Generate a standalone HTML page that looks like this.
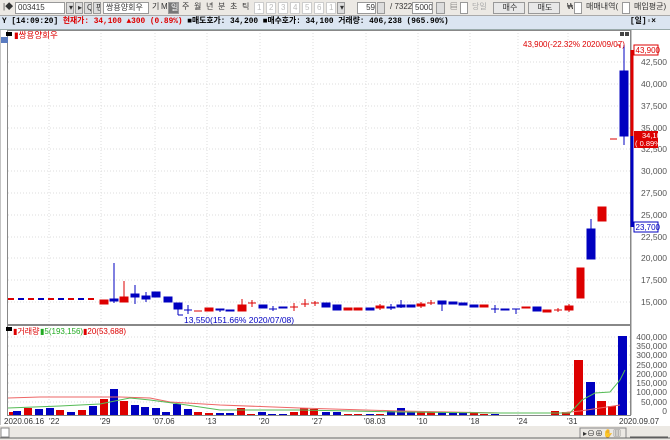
<!DOCTYPE html>
<html><head><meta charset="utf-8"><style>
*{margin:0;padding:0;box-sizing:border-box}
body{width:670px;height:440px;overflow:hidden;background:#fff;font-family:"Liberation Sans","Noto Sans CJK KR",sans-serif;font-size:10px;position:relative}
.tb{position:absolute;left:0;top:0;width:670px;height:16px;background:#ece9e4;border-bottom:1px solid #aaa}
.tb span{position:absolute;top:2px;height:12px;border:1px solid #999;background:#fff;font-size:8px;line-height:10px;padding-left:2px;color:#333;overflow:hidden;white-space:nowrap}
.ib{position:absolute;left:0;top:16px;width:670px;height:14px;background:#dbe5f1;border-bottom:1px solid #9aa;font-family:"Liberation Mono","Noto Sans CJK KR",monospace;font-size:7.8px;font-weight:bold;line-height:13px;white-space:nowrap;padding-left:2px}
</style></head><body>
<div class="tb">
<span style="left:1px;width:12px;border:none;background:none">|◆</span>
<span style="left:15px;width:50px">003415</span>
<span style="left:66px;width:8px;background:#ddd">▾</span>
<span style="left:75px;width:8px;background:#ddd">▸</span>
<span style="left:84px;width:8px;background:#ddd">Q</span>
<span style="left:93px;width:8px;background:#ddd">편</span>
<span style="left:103px;width:46px">쌍용양회우</span>
<span style="left:150px;width:10px;border:none;background:none">기</span>
<span style="left:159px;width:8px;border:none;background:none">M</span>
<span style="left:168px;width:11px;background:#777;color:#fff">일</span>
<span style="left:180px;width:11px;border:none;background:none">주</span>
<span style="left:192px;width:11px;border:none;background:none">월</span>
<span style="left:204px;width:11px;border:none;background:none">년</span>
<span style="left:216px;width:11px;border:none;background:none">분</span>
<span style="left:228px;width:11px;border:none;background:none">초</span>
<span style="left:240px;width:11px;border:none;background:none">틱</span>
<span style="left:254px;width:10px;color:#bbb;border-color:#ccc">1</span>
<span style="left:266px;width:10px;color:#bbb;border-color:#ccc">2</span>
<span style="left:278px;width:10px;color:#bbb;border-color:#ccc">3</span>
<span style="left:290px;width:10px;color:#bbb;border-color:#ccc">4</span>
<span style="left:302px;width:10px;color:#bbb;border-color:#ccc">5</span>
<span style="left:314px;width:10px;color:#bbb;border-color:#ccc">6</span>
<span style="left:326px;width:10px;color:#bbb;border-color:#ccc">1</span>
<span style="left:337px;width:8px;background:#ddd">▾</span>
<span style="left:357px;width:19px;text-align:right">59</span>
<span style="left:377px;width:8px;background:#ddd"></span>
<span style="left:388px;width:24px;border:none;background:none">/ 7322</span>
<span style="left:412px;width:21px">5000</span>
<span style="left:436px;width:9px;background:#ddd"></span>
<span style="left:448px;width:9px;border:none;background:none">▤</span>
<span style="left:460px;width:8px"></span>
<span style="left:470px;width:18px;border:none;background:none;color:#aaa">당일</span>
<span style="left:493px;width:32px;background:#e8e8e8;text-align:center">매수</span>
<span style="left:528px;width:32px;background:#e8e8e8;text-align:center">매도</span>
<span style="left:565px;width:8px;border:none;background:none">₩</span>
<span style="left:574px;width:8px"></span>
<span style="left:584px;width:38px;border:none;background:none">매매내역(</span>
<span style="left:622px;width:8px"></span>
<span style="left:632px;width:38px;border:none;background:none">매입평균)</span>
</div>
<div class="ib">Y [14:09:20] <span style="color:#d00">현재가: 34,100 ▲300 (0.89%)</span> ■매도호가: 34,200 ■매수호가: 34,100 거래량: 406,238 (965.90%)<span style="position:absolute;left:630px">[일]▫×</span></div>
<svg width="670" height="410" style="position:absolute;left:0;top:30px" viewBox="0 30 670 410" font-family="Liberation Sans,Noto Sans CJK KR,sans-serif">
<rect x="0" y="30" width="670" height="410" fill="#fff"/>
<g stroke="#ddd" stroke-dasharray="1,2" stroke-width="1">
<line x1="101" y1="30" x2="101" y2="415"/><line x1="155" y1="30" x2="155" y2="415"/><line x1="207" y1="30" x2="207" y2="415"/><line x1="260" y1="30" x2="260" y2="415"/><line x1="313" y1="30" x2="313" y2="415"/><line x1="366" y1="30" x2="366" y2="415"/><line x1="418" y1="30" x2="418" y2="415"/><line x1="470" y1="30" x2="470" y2="415"/><line x1="518" y1="30" x2="518" y2="415"/><line x1="568" y1="30" x2="568" y2="415"/><line x1="49" y1="30" x2="49" y2="415"/>
<line x1="8" y1="62" x2="630" y2="62"/><line x1="8" y1="84" x2="630" y2="84"/><line x1="8" y1="106" x2="630" y2="106"/><line x1="8" y1="128" x2="630" y2="128"/><line x1="8" y1="149" x2="630" y2="149"/><line x1="8" y1="171" x2="630" y2="171"/><line x1="8" y1="193" x2="630" y2="193"/><line x1="8" y1="215" x2="630" y2="215"/><line x1="8" y1="237" x2="630" y2="237"/><line x1="8" y1="258" x2="630" y2="258"/><line x1="8" y1="280" x2="630" y2="280"/><line x1="8" y1="302" x2="630" y2="302"/>
<line x1="8" y1="337" x2="630" y2="337"/><line x1="8" y1="346" x2="630" y2="346"/><line x1="8" y1="355" x2="630" y2="355"/><line x1="8" y1="365" x2="630" y2="365"/><line x1="8" y1="374" x2="630" y2="374"/><line x1="8" y1="383" x2="630" y2="383"/><line x1="8" y1="392" x2="630" y2="392"/><line x1="8" y1="402" x2="630" y2="402"/>
</g>
<rect x="7.5" y="30.5" width="623" height="294" fill="none" stroke="#888"/>
<rect x="7.5" y="325.5" width="623" height="90" fill="none" stroke="#888"/>
<line x1="0" y1="30" x2="0" y2="425" stroke="#888"/>
<rect x="1" y="37" width="7" height="6" fill="#5a7bc0"/>
<rect x="6" y="32" width="6" height="4" fill="#000"/>
<text x="14" y="38" font-size="8.5" fill="#d00">▮쌍용양회우</text>
<rect x="620" y="32" width="4" height="4" fill="#444"/><rect x="625" y="32" width="4" height="4" fill="#444"/>
<g stroke-width="2">
<line x1="8" y1="299" x2="95" y2="299" stroke="#d00" stroke-dasharray="6,4"/>
<line x1="18" y1="299" x2="95" y2="299" stroke="#0000c0" stroke-dasharray="6,14"/>
</g>
<g fill="#d00" stroke="#d00">
<rect x="100" y="300" width="8" height="4"/>
<line x1="124" y1="281" x2="124" y2="297"/><rect x="120" y="297" width="8" height="5"/>
<line x1="194" y1="311" x2="202" y2="311"/>
<rect x="205" y="308" width="8" height="3"/>
<line x1="242" y1="299" x2="242" y2="305"/><rect x="238" y="305" width="8" height="6"/>
<line x1="248" y1="303" x2="256" y2="303"/><line x1="252" y1="300" x2="252" y2="307"/>
<line x1="290" y1="307" x2="298" y2="307"/><line x1="294" y1="303" x2="294" y2="311"/>
<line x1="301" y1="304" x2="309" y2="304"/><line x1="305" y1="299" x2="305" y2="307"/>
<line x1="311" y1="303" x2="319" y2="303"/><line x1="315" y1="301" x2="315" y2="306"/>
<rect x="344" y="308" width="8" height="2"/><rect x="354" y="308" width="8" height="2"/>
<rect x="376" y="306" width="8" height="2"/><line x1="380" y1="304" x2="380" y2="310"/>
<rect x="417" y="304" width="8" height="2"/><line x1="421" y1="302" x2="421" y2="308"/>
<line x1="427" y1="303" x2="435" y2="303"/><line x1="431" y1="300" x2="431" y2="305"/>
<rect x="480" y="305" width="8" height="2"/><rect x="522" y="307" width="8" height="1"/>
<rect x="543" y="310" width="8" height="2"/><line x1="554" y1="310" x2="562" y2="310"/><line x1="558" y1="308" x2="558" y2="312"/>
<rect x="565" y="306" width="8" height="4"/><line x1="569" y1="304" x2="569" y2="312"/>
<rect x="577" y="268" width="7" height="30"/>
<rect x="598" y="207" width="8" height="14"/>
<line x1="610" y1="139" x2="617" y2="139" stroke-width="1"/>
</g>
<g fill="#0000c0" stroke="#0000c0">
<line x1="114" y1="263" x2="114" y2="303"/><rect x="110" y="299" width="8" height="2"/>
<line x1="135" y1="285" x2="135" y2="304"/><rect x="131" y="294" width="8" height="3"/>
<line x1="146" y1="292" x2="146" y2="302"/><rect x="142" y="296" width="8" height="3"/>
<rect x="152" y="292" width="8" height="5"/>
<rect x="164" y="297" width="8" height="5"/>
<line x1="178" y1="303" x2="178" y2="315"/><line x1="178" y1="315" x2="183" y2="315" stroke-width="1"/><rect x="174" y="303" width="8" height="6"/>
<line x1="184" y1="310" x2="192" y2="310"/><line x1="188" y1="305" x2="188" y2="314"/>
<rect x="216" y="309" width="8" height="1"/><line x1="220" y1="309" x2="220" y2="312"/>
<rect x="226" y="310" width="8" height="1"/>
<rect x="259" y="305" width="8" height="3"/>
<line x1="269" y1="309" x2="277" y2="309"/><line x1="273" y1="306" x2="273" y2="311"/>
<rect x="279" y="307" width="8" height="1"/>
<rect x="322" y="303" width="8" height="4"/>
<rect x="333" y="305" width="8" height="5"/>
<rect x="366" y="308" width="8" height="2"/><rect x="387" y="307" width="8" height="1"/><line x1="391" y1="304" x2="391" y2="310"/>
<rect x="397" y="305" width="8" height="2"/><line x1="401" y1="300" x2="401" y2="308"/>
<rect x="407" y="305" width="8" height="2"/>
<rect x="438" y="301" width="8" height="3"/><line x1="442" y1="301" x2="442" y2="311"/>
<rect x="449" y="302" width="8" height="2"/><rect x="459" y="303" width="8" height="2"/><rect x="470" y="305" width="8" height="2"/>
<line x1="491" y1="309" x2="499" y2="309"/><line x1="495" y1="305" x2="495" y2="313"/>
<rect x="501" y="309" width="8" height="1"/><line x1="512" y1="309" x2="520" y2="309"/><line x1="516" y1="309" x2="516" y2="314"/>
<rect x="533" y="307" width="8" height="4"/>
<line x1="591" y1="219" x2="591" y2="229"/><rect x="587" y="229" width="8" height="30"/>
<line x1="624" y1="45" x2="624" y2="145"/><rect x="620" y="71" width="8" height="65"/>
</g>
<text x="184" y="323" font-size="8.5" fill="#0000c0">13,550(151.66% 2020/07/08)</text>
<text x="523" y="47" font-size="8" fill="#d00">43,900(-22.32% 2020/09/07)</text>
<polyline points="617,45 620,45 620,48" fill="none" stroke="#d00"/>
<line x1="631" y1="30" x2="631" y2="415" stroke="#888"/>
<line x1="632" y1="50" x2="632" y2="136" stroke="#d00" stroke-width="3"/>
<line x1="632" y1="136" x2="632" y2="227" stroke="#0000c0" stroke-width="3"/>
<g font-size="8.5" fill="#555" text-anchor="end">
<text x="667" y="65">42,500</text><text x="667" y="87">40,000</text><text x="667" y="109">37,500</text><text x="667" y="131">35,000</text><text x="667" y="152">32,500</text><text x="667" y="174">30,000</text><text x="667" y="196">27,500</text><text x="667" y="218">25,000</text><text x="667" y="240">22,500</text><text x="667" y="261">20,000</text><text x="667" y="283">17,500</text><text x="667" y="305">15,000</text>
</g>
<rect x="634" y="45" width="24" height="10" fill="#fff" stroke="#d00"/><text x="635.5" y="53" font-size="8" fill="#d00">43,900</text>
<rect x="634" y="131" width="24" height="17" fill="#d00"/><text x="642" y="138" font-size="7.5" fill="#fff">34,100</text><text x="635" y="146" font-size="7.5" fill="#fff">( 0.89%)</text>
<rect x="634" y="222" width="24" height="10" fill="#fff" stroke="#0000c0"/><text x="635.5" y="230" font-size="8" fill="#0000c0">23,700</text>
<rect x="6" y="327" width="6" height="4" fill="#000"/>
<text x="13" y="334" font-size="8" fill="#d00">▮거래량</text><text x="40" y="334" font-size="8" fill="#2a2">▮5(193,156)</text><text x="83" y="334" font-size="8" fill="#d00">▮20(53,688)</text>
<g fill="#d00">
<rect x="9" y="412" width="8" height="3"/><rect x="24" y="408" width="8" height="7"/><rect x="56" y="410" width="8" height="5"/><rect x="78" y="410" width="8" height="5"/><rect x="100" y="399" width="8" height="16"/><rect x="120" y="401" width="8" height="14"/><rect x="194" y="412" width="8" height="3"/><rect x="205" y="413" width="8" height="2"/><rect x="237" y="408" width="8" height="7"/><rect x="247" y="414" width="8" height="1"/><rect x="290" y="412" width="8" height="3"/><rect x="300" y="408" width="8" height="7"/><rect x="310" y="409" width="8" height="6"/><rect x="344" y="414" width="8" height="1"/><rect x="354" y="414" width="8" height="1"/><rect x="376" y="414" width="8" height="1"/><rect x="417" y="412" width="8" height="3"/><rect x="427" y="412" width="8" height="3"/><rect x="470" y="413" width="8" height="2"/><rect x="480" y="414" width="8" height="1"/><rect x="551" y="411" width="8" height="4"/><rect x="562" y="412" width="8" height="3"/><rect x="574" y="360" width="9" height="55"/><rect x="597" y="401" width="9" height="14"/><rect x="608" y="406" width="8" height="9"/>
</g>
<g fill="#0000c0">
<rect x="13" y="411" width="8" height="4"/><rect x="35" y="409" width="8" height="6"/><rect x="46" y="408" width="8" height="7"/><rect x="67" y="412" width="8" height="3"/><rect x="89" y="406" width="8" height="9"/><rect x="110" y="389" width="8" height="26"/><rect x="131" y="405" width="8" height="10"/><rect x="141" y="407" width="8" height="8"/><rect x="152" y="408" width="8" height="7"/><rect x="162" y="412" width="8" height="3"/><rect x="173" y="404" width="8" height="11"/><rect x="184" y="409" width="8" height="6"/><rect x="216" y="413" width="8" height="2"/><rect x="226" y="413" width="8" height="2"/><rect x="258" y="412" width="8" height="3"/><rect x="268" y="414" width="8" height="1"/><rect x="279" y="414" width="8" height="1"/><rect x="322" y="412" width="8" height="3"/><rect x="333" y="412" width="8" height="3"/><rect x="366" y="414" width="8" height="1"/><rect x="387" y="411" width="8" height="4"/><rect x="397" y="408" width="8" height="7"/><rect x="407" y="412" width="8" height="3"/><rect x="438" y="412" width="8" height="3"/><rect x="449" y="413" width="8" height="2"/><rect x="459" y="413" width="8" height="2"/><rect x="491" y="414" width="8" height="1"/><rect x="586" y="382" width="9" height="33"/><rect x="618" y="336" width="9" height="79"/>
</g>
<polyline points="8,398 40,397 100,397 120,397 150,398 170,402 220,405 300,408 400,411 500,413 560,413 580,411 600,408 620,405" fill="none" stroke="#e66" stroke-width="1"/>
<polyline points="8,408 60,406 100,404 130,398 150,400 180,404 220,410 300,410 400,412 500,413 570,413 582,400 595,393 610,392 620,380 625,370" fill="none" stroke="#5b5" stroke-width="1"/>
<g font-size="8.5" fill="#555" text-anchor="end">
<text x="667" y="340">400,000</text><text x="667" y="349">350,000</text><text x="667" y="358">300,000</text><text x="667" y="368">250,000</text><text x="667" y="377">200,000</text><text x="667" y="386">150,000</text><text x="667" y="395">100,000</text><text x="667" y="405">50,000</text><text x="667" y="414">0</text>
</g>
<g font-size="8" fill="#333">
<text x="4" y="424">2020.06.16</text><text x="49" y="424">'22</text><text x="100" y="424">'29</text><text x="153" y="424">'07.06</text><text x="206" y="424">'13</text><text x="259" y="424">'20</text><text x="312" y="424">'27</text><text x="364" y="424">'08.03</text><text x="417" y="424">'10</text><text x="469" y="424">'18</text><text x="517" y="424">'24</text><text x="567" y="424">'31</text><text x="619" y="424">2020.09.07</text>
</g>
<rect x="0" y="426" width="670" height="14" fill="#ece9e4"/>
<rect x="1" y="428" width="8" height="9" fill="#fff" stroke="#888"/>
<rect x="580" y="428" width="46" height="10" fill="#ece9e4" stroke="#888"/>
<text x="583" y="436" font-size="8" fill="#333">▸⊖⊕✋▥</text>
<line x1="630" y1="437" x2="668" y2="437" stroke="#555"/>
<line x1="0" y1="438" x2="670" y2="438" stroke="#666"/>
</svg>
</body></html>
